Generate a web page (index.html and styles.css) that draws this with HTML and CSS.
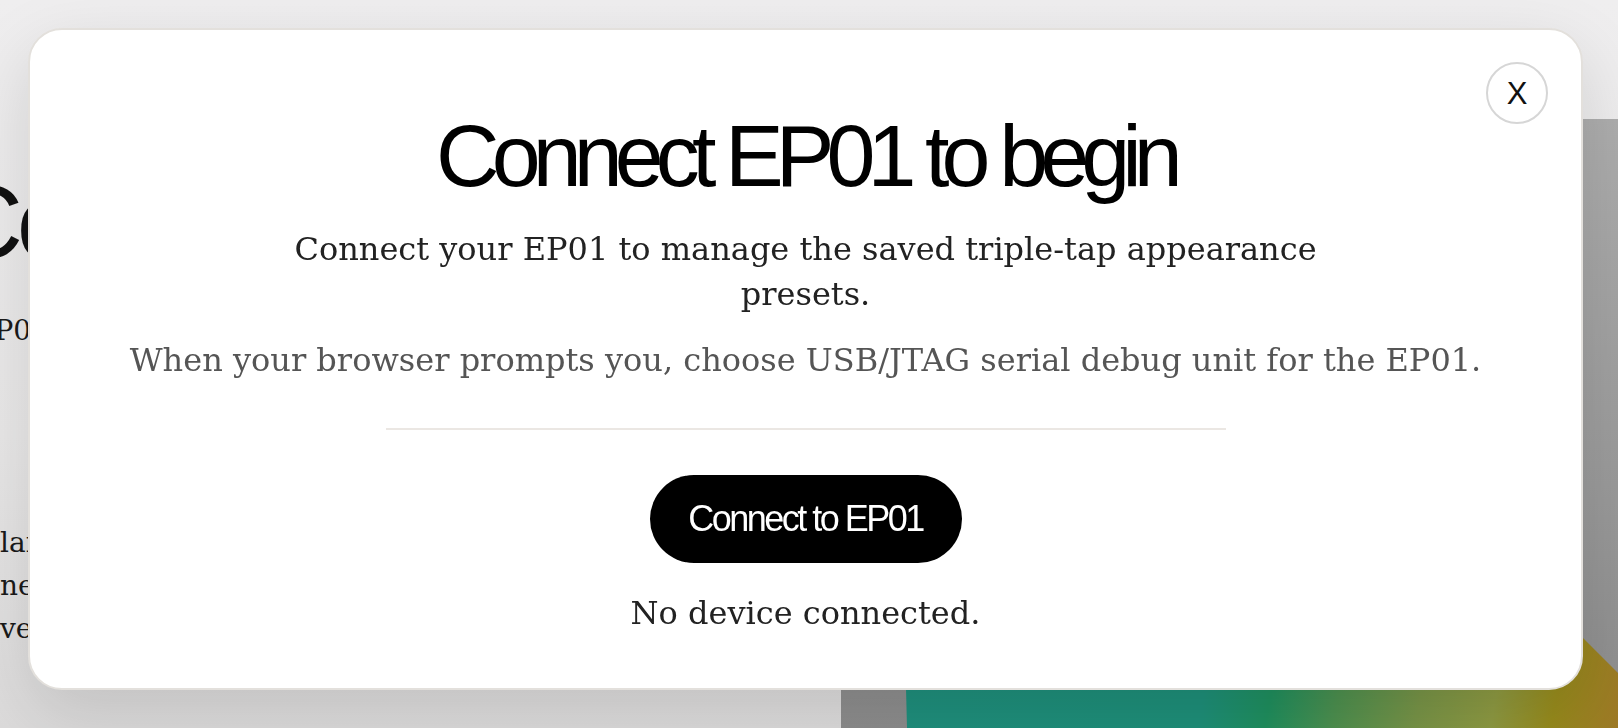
FILE: index.html
```html
<!DOCTYPE html>
<html lang="en">
<head>
<meta charset="utf-8">
<title>Connect EP01</title>
<link rel="stylesheet" href="styles.css">
</head>
<body>
<div class="page">
  <section class="bg-left">
    <h1 class="bg-title">Connect</h1>
    <p class="bg-kicker">EP01 presets</p>
    <p class="bg-body">laid out for the<br>need to save<br>very quickly</p>
  </section>
  <section class="bg-right">
    <div class="panel">
      <div class="photo"></div>
    </div>
  </section>
</div>

<div class="overlay">
  <div class="modal" role="dialog" aria-labelledby="modal-title">
    <button class="close" type="button" aria-label="Close">X</button>
    <h2 class="title" id="modal-title">Connect EP01 to begin</h2>
    <p class="lead">Connect your EP01 to manage the saved triple-tap appearance presets.</p>
    <p class="hint">When your browser prompts you, choose USB/JTAG serial debug unit for the EP01.</p>
    <hr class="divider">
    <button class="connect" type="button">Connect to EP01</button>
    <p class="status">No device connected.</p>
  </div>
</div>
</body>
</html>
```

FILE: styles.css
```css
* { box-sizing: border-box; }

html, body {
  margin: 0;
  height: 728px;
  overflow: hidden;
}

body {
  background: linear-gradient(180deg, #efeeef 0%, #e9e8e8 60%, #dcdbdb 100%);
  font-family: "DejaVu Serif", serif;
  color: #1a1a1a;
}

/* ---------- page behind the dialog ---------- */
.page {
  display: grid;
  grid-template-columns: 841px 1fr;
  height: 728px;
}

.bg-left {
  overflow: hidden;
}

.bg-title {
  margin: 170px 0 0 -52px;
  font-family: "Liberation Sans", Arial, sans-serif;
  font-weight: 400;
  font-size: 104px;
  line-height: 104px;
  letter-spacing: -0.06em;
  color: #111;
}

.bg-kicker {
  margin: 40px 0 0 -26px;
  font-size: 28px;
  line-height: 34px;
}

.bg-body {
  margin: 173px 0 0 0;
  font-size: 28px;
  line-height: 43px;
  color: #1a1a1a;
}

.bg-right {
  padding-top: 119px;
}

.panel {
  height: 100%;
  background: linear-gradient(180deg, #adadad 0%, #9a9a9a 60%, #8c8c8c 100%);
  display: flex;
  flex-direction: column;
  justify-content: flex-end;
}

.photo {
  height: 200px;
  margin-left: 61px;
  background: linear-gradient(100deg,
    #1f8f7d 0%,
    #1e8f79 44%,
    #1f8f5e 53%,
    #4d904f 62%,
    #789447 73%,
    #8e9a42 83%,
    #968a1c 91%,
    #9e7926 100%);
  clip-path: polygon(0 0, 571px 0, 100% 145px, 100% 100%, 5px 100%);
}

/* ---------- dialog ---------- */
.overlay {
  position: fixed;
  inset: 0;
  display: flex;
  padding: 28px 35px 38px 28px;
}

.modal {
  flex: 1;
  position: relative;
  display: flex;
  flex-direction: column;
  align-items: center;
  padding: 82px 40px 0;
  background: #fff;
  border: 2px solid #e3e0dc;
  border-radius: 34px;
  box-shadow: 0 24px 70px rgba(0, 0, 0, 0.13);
  text-align: center;
}

.close {
  position: absolute;
  top: 32px;
  right: 33px;
  width: 62px;
  height: 62px;
  border: 2px solid #d6d6d6;
  border-radius: 50%;
  background: #fff;
  color: #111;
  font-family: "Liberation Sans", Arial, sans-serif;
  font-size: 31px;
  line-height: 1;
  padding: 0;
}

.title {
  margin: 0;
  font-family: "Liberation Sans", Arial, sans-serif;
  font-weight: 400;
  font-size: 88px;
  line-height: 88px;
  letter-spacing: -0.09em;
  color: #000;
}

.lead {
  margin: 27px 0 0;
  max-width: 1060px;
  font-size: 32px;
  line-height: 45px;
  color: #222;
}

.hint {
  margin: 21px 0 0;
  font-size: 32px;
  line-height: 45px;
  color: #555;
  white-space: nowrap;
}

.divider {
  width: 840px;
  height: 2px;
  margin: 45px 0 0;
  border: 0;
  background: #ebe7e3;
}

.connect {
  margin-top: 45px;
  width: 312px;
  height: 88px;
  border: 0;
  border-radius: 44px;
  background: #000;
  color: #fff;
  font-family: "Liberation Sans", Arial, sans-serif;
  font-size: 36px;
  letter-spacing: -0.07em;
  padding: 0;
}

.status {
  margin: 28px 0 0;
  font-size: 32px;
  line-height: 45px;
  color: #222;
}
```
